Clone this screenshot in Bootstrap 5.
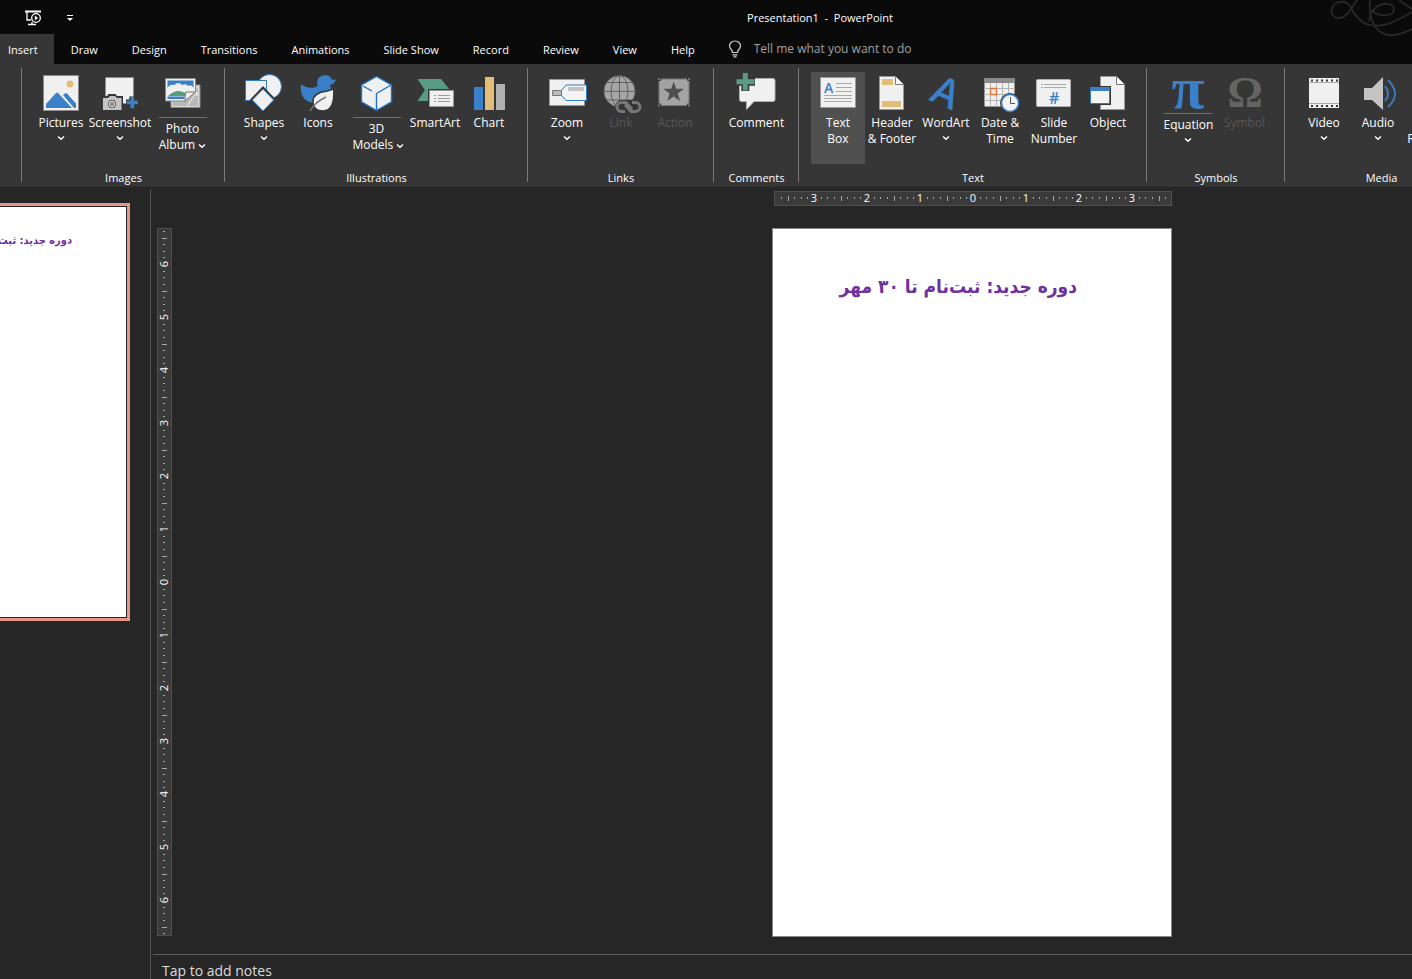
<!DOCTYPE html>
<html lang="en">
<head>
<meta charset="utf-8">
<meta name="viewport" content="width=device-width, initial-scale=1">
<title>Presentation1 - PowerPoint</title>
<link rel="stylesheet" href="https://cdn.jsdelivr.net/npm/bootstrap@5.3.0/dist/css/bootstrap.min.css">
<style>
  body { font: 12px/16px "Open Sans", "Noto Sans", sans-serif; background: #262626; color: #fff; }
  button { font: inherit; color: inherit; background: none; border: 0; padding: 0; }
  .app-head { background: #0a0a0a; }
  .title-row { height: 34px; padding-top: 2px; }
  .doc-title { padding-left: 228px; pointer-events: none; font-size: 11px; }
  .qat { padding-left: 24px; gap: 24px; }
  .swirl { top: 0; right: 0; }
  .tab-strip { height: 30px; }
  .tab-strip .nav-link { color: #fff; padding: 8px 17px 6px; font-size: 11px; line-height: 16px; white-space: nowrap; }
  .tab-strip .nav-link.first { padding-left: 8px; padding-right: 16px; background: #363636; }
  .tell { padding-left: 16px; gap: 12px; }
  .tell input { background: none; border: 0; padding: 0; width: 200px; color: #fff; outline: 0; font-size: 12px; }
  .tell input::placeholder { color: #a0a0a0; opacity: 1; }
  .ribbon { background: #363636; padding: 4px 0; height: 123px; border-bottom: 1px solid #303030; }
  .rib-group { border-right: 1px solid #7a7a7a; padding: 4px 11px 0 12px; height: 114px; }
  .rib-group.stub { padding: 0; width: 22px; }
  .rib-group.last { border: 0; }
  .rib-name { margin-top: 6px; font-size: 11px; }
  .tool { width: 54px; height: 92px; white-space: nowrap; }
  .tool.w-sym { width: 57px; }
  .tool.w-md { width: 61px; }
  .tool.w-3d { width: 63px; }
  .tool.w-lg { width: 64px; }
  .tool svg.pic { width: 40px; height: 43px; overflow: visible; }
  .tool .split { border-top: 1px solid #707070; margin-top: 2px; padding-top: 3px; width: 48px; }
  .tool .split.up { margin-top: -2px; }
  .tool.active { background: #505050; }
  .tool:disabled { color: #575757; }
  .chev { width: 8px; height: 6px; fill: none; stroke: currentColor; stroke-width: 1.5; }
  .thumbs { width: 151px; border-right: 1px solid #555; margin-top: 2px; padding: 14px 20px 0 0; }
  .thumb { height: 418px; background: #fff; border: solid #e5968a; border-width: 3px 3px 3px 0; box-shadow: inset -1px 1px #222, inset 0 -1px #222; padding: 25px 55px 0 0; }
  .fa { color: #7030a0; font-family: "DejaVu Sans Condensed", "DejaVu Sans", sans-serif; direction: rtl; white-space: nowrap; font-weight: 700; }
  .thumb .fa { font-size: 11px; line-height: 20px; }
  .rulers { padding: 4px 240px 17px 6px; }
  .ruler { display: block; background: #3a3a3a; outline: 1px solid #505050; outline-offset: -1px; }
  .gap-canvas { padding-top: 22px; }
  .slide { width: 400px; background: #fff; border: 1px solid #8a8a8a; padding: 41px 94px 0 0; }
  .slide .fa { font-size: 19px; line-height: 32px; }
  .notes { border-top: 1px solid #5c5c5c; height: 25px; margin-left: 2px; padding: 5px 9px 0; font-size: 14px; line-height: 22px; color: #dcdcdc; }
</style>
</head>
<body class="vh-100 overflow-hidden d-flex flex-column">
<svg class="d-none"><symbol id="chev" viewBox="0 0 8 6"><path d="M1 1.5 4 4.2 7 1.5"/></symbol></svg>

<header class="app-head position-relative">
  <svg class="swirl position-absolute" width="86" height="40" fill="none" stroke="#2b2b2b" stroke-width="1.6">
    <path d="M31 0C25 8 21 18 13 18 7 18 4 13 6 8 9 1 19-1 24 6c5 9 10 17 20 19 14 3 26-4 42-13"/>
    <path d="M44 0c-1 10 0 28 14 34 8 3 18 0 28-5M43 22C44 8 54 3 62 4c8 1 8 10 0 11-6 1-12 0-16-5M73 0l13 9"/>
  </svg>
  <div class="title-row d-flex align-items-center position-relative">
    <div class="qat d-flex align-items-center position-absolute start-0">
      <button aria-label="Start slide show"><svg class="d-block" width="18" height="16" fill="none" stroke="#fff" stroke-width="1.3"><path d="M1 1.500h16" stroke-width="2"/><path d="M3 2v8h4M4 14.500h8M8 14v-2"/><circle cx="12" cy="8" r="4.300"/><path d="m10.800 5.500 3.400 2.500-3.400 2.500z" fill="#fff" stroke="none"/></svg></button>
      <button aria-label="Customize toolbar"><svg class="d-block" width="8" height="8"><path d="M1 1.500h6" stroke="#fff"/><path d="M1 4h6L4 7z" fill="#fff"/></svg></button>
    </div>
    <div class="doc-title w-100 text-center">Presentation1&nbsp; -&nbsp; PowerPoint</div>
  </div>
  <nav class="tab-strip nav flex-nowrap">
    <a class="nav-link first" href="#">Insert</a><a class="nav-link" href="#">Draw</a><a class="nav-link" href="#">Design</a><a class="nav-link" href="#">Transitions</a><a class="nav-link" href="#">Animations</a><a class="nav-link" href="#">Slide Show</a><a class="nav-link" href="#">Record</a><a class="nav-link" href="#">Review</a><a class="nav-link" href="#">View</a><a class="nav-link" href="#">Help</a>
    <label class="tell d-flex align-items-center">
      <svg width="14" height="18" fill="none" stroke="#d0d0d0" stroke-width="1.200"><path d="M4.500 12.500C4.500 9.500 1.500 9 1.500 6a5.500 5 0 0 1 11 0c0 3-3 3.500-3 6.500zM4.500 14.800h5M5.500 16.800h3"/></svg>
      <input type="text" placeholder="Tell me what you want to do" aria-label="Tell me what you want to do">
    </label>
  </nav>
</header>

<section class="ribbon d-flex flex-shrink-0 overflow-hidden">
  <div class="rib-group stub flex-shrink-0"></div>

  <div class="rib-group flex-shrink-0 text-center">
    <div class="d-flex">
      <button class="tool d-flex flex-column align-items-center"><svg class="pic" viewBox="0 0 40 43"><rect x="2.500" y="3.500" width="35" height="35" fill="#f0f0f0" stroke="#8a8a8a"/><circle cx="29" cy="12" r="3.500" fill="#e3bd77"/><path d="M5 36v-4l10-11q1-.8 2 0l14 15zM22 23l2-1.500q1-.8 2 0l9 10V36h-2z" fill="#3a80c9"/></svg><span>Pictures</span><svg class="chev mt-1"><use href="#chev"/></svg></button>
      <button class="tool w-lg d-flex flex-column align-items-center"><svg class="pic" viewBox="0 0 40 43"><rect x="5.500" y="5.500" width="28" height="26" fill="#f0f0f0" stroke="#8a8a8a" stroke-dasharray="2 1"/><path d="M2 24h5l1.500-2h7L17 24h6v15H2z" fill="#363636"/><path d="M3 26h5l2-2h5l2 2h4.500v12H3z" fill="#c4c4c4"/><circle cx="12" cy="32" r="4" fill="#555"/><circle cx="12" cy="32" r="2.700" fill="#888" stroke="#e8e8e8"/><path d="M26 30.500h12M32.300 24.500v12" stroke="#363636" stroke-width="6"/><path d="M26.500 30.500h11.500M32.300 24.700v11.500" stroke="#3a80c9" stroke-width="3.500"/></svg><span>Screenshot</span><svg class="chev mt-1"><use href="#chev"/></svg></button>
      <button class="tool w-md d-flex flex-column align-items-center"><svg class="pic" viewBox="0 0 40 43"><path d="M8 13h29v22.500H8z" fill="#d8d8d8" stroke="#8a8a8a"/><path d="M10 34V29h14L35 15v19z" fill="#b8b8b8"/><path d="M2.500 6.500h30v13l-10 9.500h-20z" fill="#f0f0f0" stroke="#8a8a8a"/><path d="M4.500 8.500h26V16q-2-4-5-2-3-3-6-1-5-4-8 0-5-1-7 3zM4.500 24.500h17v2.500h-17z" fill="#3a80c9"/><path d="M5 24q9-8 17-3v3z" fill="#5a9b7c"/><path d="M22 29l.5-9h10z" fill="#f0f0f0" stroke="#777"/><path d="m24 34 10-14v4" fill="none" stroke="#f5f5f5"/></svg><span class="split">Photo<br>Album&nbsp;<svg class="chev"><use href="#chev"/></svg></span></button>
    </div>
    <div class="rib-name">Images</div>
  </div>

  <div class="rib-group flex-shrink-0 text-center">
    <div class="d-flex">
      <button class="tool d-flex flex-column align-items-center"><svg class="pic" viewBox="0 0 40 43" fill="#f0f0f0" stroke="#2f7cc4"><circle cx="25.500" cy="14.500" r="12"/><path d="M1.500 8.500h21v20h-21z"/><path d="m19 15.500 12 12.500-12 12.500L7 28z" stroke="#363636" stroke-width="2"/><path d="m19 17 10.500 11L19 39 8.500 28z"/></svg><span>Shapes</span><svg class="chev mt-1"><use href="#chev"/></svg></button>
      <button class="tool d-flex flex-column align-items-center"><svg class="pic" viewBox="0 0 40 43"><path d="M3 12q6 5 14 3.500 4-1 2-4.500A8 8 0 0 1 34 7.500q2 1 4-.5-1 5-6 6 3 7-2 13-6 7-15 5Q1 28 3 12z" fill="#3a80c9"/><path d="M35 18q1 22-12 20-3 0-5-2-1-1-2-3-2-9 7-12 7-1 12-3z" fill="#f0f0f0" stroke="#363636" stroke-width="3"/><path d="M35 18q1 22-12 20-3 0-5-2-1-1-2-3-2-9 7-12 7-1 12-3z" fill="#f0f0f0"/><path d="M12 39q5-9 16-14" fill="none" stroke="#777" stroke-width="1.500"/></svg><span>Icons</span></button>
      <button class="tool w-3d d-flex flex-column align-items-center"><svg class="pic" viewBox="0 0 40 43" stroke="#1b74c5" stroke-width="1.400" stroke-linejoin="round"><path d="m19.500 4.500 15 8.300v17l-15 8.700-15-8.700v-17z" fill="#f0f0f0"/><path d="m6 14 9 5M34 13l-14.500 8.500V38" fill="none"/></svg><span class="split">3D<br>Models&nbsp;<svg class="chev"><use href="#chev"/></svg></span></button>
      <button class="tool d-flex flex-column align-items-center"><svg class="pic" viewBox="0 0 40 43"><path d="M2.500 7h23.500L35 18v11H2.500L10 18z" fill="#5a9b86"/><path d="M13 17h28v19H13z" fill="#363636"/><path d="M14.500 18.500h24v16h-24z" fill="#f0f0f0" stroke="#999"/><path d="M19 23.500h2m2 0h12M19 26.500h2m2 0h12M19 29.500h2m2 0h12" stroke="#999"/></svg><span>SmartArt</span></button>
      <button class="tool d-flex flex-column align-items-center"><svg class="pic" viewBox="0 0 40 43"><path d="M5 15h9v23H5z" fill="#3a80c9"/><path d="M16 5h9v33h-9z" fill="#e3bd77"/><path d="M27 12h9v26h-9z" fill="#b0b0b0"/></svg><span>Chart</span></button>
    </div>
    <div class="rib-name">Illustrations</div>
  </div>

  <div class="rib-group flex-shrink-0 text-center">
    <div class="d-flex">
      <button class="tool d-flex flex-column align-items-center"><svg class="pic" viewBox="0 0 40 43"><path d="M2.500 7.500h35v26h-35z" fill="#f0f0f0" stroke="#999"/><path d="M5.500 18.500h9v5h-9z" fill="#b5bcc2" stroke="#777"/><path d="M14.500 18.500 19 13h20.500v15.500H19l-4.500-5z" fill="#f4f4f4" stroke="#2f7cc4"/><path d="M21 15h16v4H21z" fill="#c4c4c4"/></svg><span>Zoom</span><svg class="chev mt-1"><use href="#chev"/></svg></button>
      <button class="tool d-flex flex-column align-items-center" disabled><svg class="pic" viewBox="0 0 40 43" fill="none"><circle cx="18.500" cy="19.300" r="15.500" fill="#a6a6a6" stroke="#707070"/><path d="M18.500 4v31M3 19.300h31M6 10.500h25M6 28h25" stroke="#606060"/><ellipse cx="18.500" cy="19.300" rx="8.500" ry="15.500" stroke="#606060"/><rect x="14" y="28" width="27" height="14" rx="7" fill="#363636"/><g stroke="#777" stroke-width="3"><path d="M24 39.500h-3.500a4.500 4.500 0 0 1 0-9H25l6 7M31 30.500h3.500a4.500 4.500 0 0 1 0 9H30l-6-7"/></g></svg><span>Link</span></button>
      <button class="tool d-flex flex-column align-items-center" disabled><svg class="pic" viewBox="0 0 40 43"><path d="M4 7h30v26.500H4z" fill="#a3a3a3" stroke="#777"/><path d="m18.700 9.500 2.500 7.300h7.800l-6.200 4.700 2.300 7.500-6.400-4.500-6.400 4.500 2.300-7.500L8.400 16.800h7.800z" fill="#505050"/><path d="M2.500 5.500h3v3h-3zM32.500 5.500h3v3h-3zM2.500 32h3v3h-3zM32.500 32h3v3h-3z" fill="#777" stroke="#363636"/></svg><span>Action</span></button>
    </div>
    <div class="rib-name">Links</div>
  </div>

  <div class="rib-group flex-shrink-0 text-center">
    <div class="d-flex">
      <button class="tool w-md d-flex flex-column align-items-center"><svg class="pic" viewBox="0 0 40 43"><path d="M4 6.500h32q2 0 2 2v19q0 2-2 2H17l-7.500 8v-8H4.500q-2 0-2-2v-19q0-2 1.500-2z" fill="#f0f0f0" stroke="#b0b0b0"/><path d="M-1 9.700h19M8.300 .5v18.500" stroke="#363636" stroke-width="8"/><path d="M-.5 9.700h18M8.300 1v17.500" stroke="#5a9b86" stroke-width="5"/></svg><span>Comment</span></button>
    </div>
    <div class="rib-name">Comments</div>
  </div>

  <div class="rib-group flex-shrink-0 text-center">
    <div class="d-flex">
      <button class="tool active d-flex flex-column align-items-center"><svg class="pic" viewBox="0 0 40 43"><path d="M2.500 5.500h35v30h-35z" fill="#f0f0f0" stroke="#999"/><text x="6" y="21" font-size="14" font-weight="600" fill="#3a80c9">A</text><path d="M18 11.500h16M18 15.500h16M18 19.500h16M6 23.500h28M6 26.500h28M6 29.500h28" stroke="#aaa"/></svg><span>Text<br>Box</span></button>
      <button class="tool d-flex flex-column align-items-center"><svg class="pic" viewBox="0 0 40 43"><path d="M7.500 4.500h16l8 8v25h-24z" fill="#f0f0f0" stroke="#999"/><path d="M23.500 4.500v8h8" fill="#fff" stroke="#777"/><path d="M10 7h11v6H10zM10 29h19v6H10z" fill="#e3bd77"/></svg><span>Header<br>&amp; Footer</span></button>
      <button class="tool d-flex flex-column align-items-center"><svg class="pic" viewBox="0 0 40 43"><text x="20" y="34" text-anchor="middle" font-size="40" font-weight="600" fill="#3a80c9" transform="rotate(24 19 20)">A</text></svg><span>WordArt</span><svg class="chev mt-1"><use href="#chev"/></svg></button>
      <button class="tool d-flex flex-column align-items-center"><svg class="pic" viewBox="0 0 40 43"><path d="M4.500 6.500h30v28h-30z" fill="#f0f0f0"/><path d="M4 6h31v5H4z" fill="#8a8a8a"/><path d="M10.500 11v24M16.500 11v24M22.500 11v24M28.500 11v24M4 16.500h31M4 22.500h31M4 28.500h31" stroke="#b5b5b5"/><path d="M10.500 16.500h6v6h-6z" fill="#f8e8dc" stroke="#d9763a" stroke-width="1.300"/><circle cx="30" cy="31" r="10" fill="#363636"/><circle cx="30" cy="31" r="8.500" fill="#f4f4f4" stroke="#3a80c9" stroke-width="1.500"/><path d="M30.500 25v6.500H35" fill="none" stroke="#555"/></svg><span>Date &amp;<br>Time</span></button>
      <button class="tool d-flex flex-column align-items-center"><svg class="pic" viewBox="0 0 40 43"><rect x="2.500" y="7.500" width="34" height="27" rx="1" fill="#f0f0f0" stroke="#b0b0b0"/><path d="M7 12.500h2m1 0h22M7 15.500h2m1 0h22" stroke="#aaa"/><text x="15" y="32" font-size="16" font-weight="600" fill="#3a80c9">#</text></svg><span>Slide<br>Number</span></button>
      <button class="tool d-flex flex-column align-items-center"><svg class="pic" viewBox="0 0 40 43"><path d="M12.500 4.500h16l8 8v25h-24z" fill="#f0f0f0" stroke="#999"/><path d="M28.500 4.500v8h8" fill="#fff" stroke="#777"/><path d="M1 14h22v19H1z" fill="#363636"/><path d="M2.500 15.500h19v16h-19z" fill="#f4f4f4" stroke="#2f7cc4"/><path d="M2 15h20v4H2z" fill="#3a80c9"/></svg><span>Object</span></button>
    </div>
    <div class="rib-name">Text</div>
  </div>

  <div class="rib-group flex-shrink-0 text-center">
    <div class="d-flex">
      <button class="tool w-sym d-flex flex-column align-items-center"><svg class="pic" viewBox="0 0 40 43"><text x="20" y="36" text-anchor="middle" font-size="60" font-weight="700" font-family="Liberation Serif" fill="#3a80c9">π</text></svg><span class="split up">Equation</span><svg class="chev mt-1"><use href="#chev"/></svg></button>
      <button class="tool w-sym d-flex flex-column align-items-center" disabled><svg class="pic" viewBox="0 0 40 43"><text x="20" y="35" text-anchor="middle" font-size="44" font-weight="700" font-family="Liberation Serif" fill="#646464">Ω</text></svg><span>Symbol</span></button>
    </div>
    <div class="rib-name">Symbols</div>
  </div>

  <div class="rib-group last flex-shrink-0 text-center">
    <div class="d-flex">
      <button class="tool d-flex flex-column align-items-center"><svg class="pic" viewBox="0 0 40 43"><path d="M5 6h30v30H5z" fill="#f0f0f0"/><path d="M7 8.500h27M7 34h27" stroke="#363636" stroke-width="2" stroke-dasharray="2 3"/><path d="M5 10.500h30M5 31.500h30" stroke="#aaa"/></svg><span>Video</span><svg class="chev mt-1"><use href="#chev"/></svg></button>
      <button class="tool d-flex flex-column align-items-center"><svg class="pic" viewBox="0 0 40 43"><path d="M6 16h8L25 5v33L14 28H6z" fill="#c4c4c4"/><g fill="none" stroke="#3a80c9" stroke-width="1.800"><path d="M27 14q6 8 0 15M30 8q14 14 0 27"/></g></svg><span>Audio</span><svg class="chev mt-1"><use href="#chev"/></svg></button>
      <button class="tool w-md d-flex flex-column align-items-center"><svg class="pic" viewBox="0 0 40 43"><path d="M8 7h26v26H8z" fill="#f0f0f0"/></svg><span>Screen<br>Recording</span></button>
    </div>
    <div class="rib-name">Media</div>
  </div>
</section>

<main class="d-flex flex-grow-1 overflow-hidden">
  <aside class="thumbs flex-shrink-0">
    <div class="thumb overflow-hidden"><div class="fa">دوره جدید: ثبت‌نام تا ۳۰ مهر</div></div>
  </aside>
  <section class="d-flex flex-column flex-grow-1">
    <div class="rulers d-flex flex-column flex-grow-1">
      <div class="d-flex justify-content-end"><svg class="ruler" id="rulerX" width="398" height="15"></svg></div>
      <div class="gap-canvas d-flex flex-grow-1 justify-content-between">
        <svg class="ruler" id="rulerY" width="15" height="708"></svg>
        <div class="slide"><div class="fa">دوره جدید: ثبت‌نام تا ۳۰ مهر</div></div>
      </div>
    </div>
    <div class="notes">Tap to add notes</div>
  </section>
</main>

<script src="https://cdn.jsdelivr.net/npm/bootstrap@5.3.0/dist/js/bootstrap.bundle.min.js"></script>
<script>
  // One unit is 53px, split in eighths: a dot per eighth, a taller mark at each half.
  function drawRuler(id, length, vertical) {
    const mid = length / 2, unit = 53;
    let out = '';
    for (let i = -60; i <= 60; i++) {
      const p = Math.round(mid + i * unit / 8);
      if (p < 3 || p > length - 3) continue;
      if (i % 8 === 0) {
        const at = vertical ? `x="7" y="${p}" transform="rotate(-90 7 ${p})"` : `x="${p}" y="7"`;
        out += `<text ${at} dy="4" text-anchor="middle" font-size="11" fill="#fff">${Math.abs(i / 8)}</text>`;
      } else {
        const h = i % 4 === 0 ? 5 : 2, s = Math.round(7 - h / 2);
        out += vertical ? `<rect x="${s}" y="${p}" width="${h}" height="1" fill="#a8a8a8"/>`
                        : `<rect x="${p}" y="${s}" width="1" height="${h}" fill="#a8a8a8"/>`;
      }
    }
    document.getElementById(id).innerHTML = out;
  }
  drawRuler('rulerX', 398, false);
  drawRuler('rulerY', 708, true);
</script>
</body>
</html>
